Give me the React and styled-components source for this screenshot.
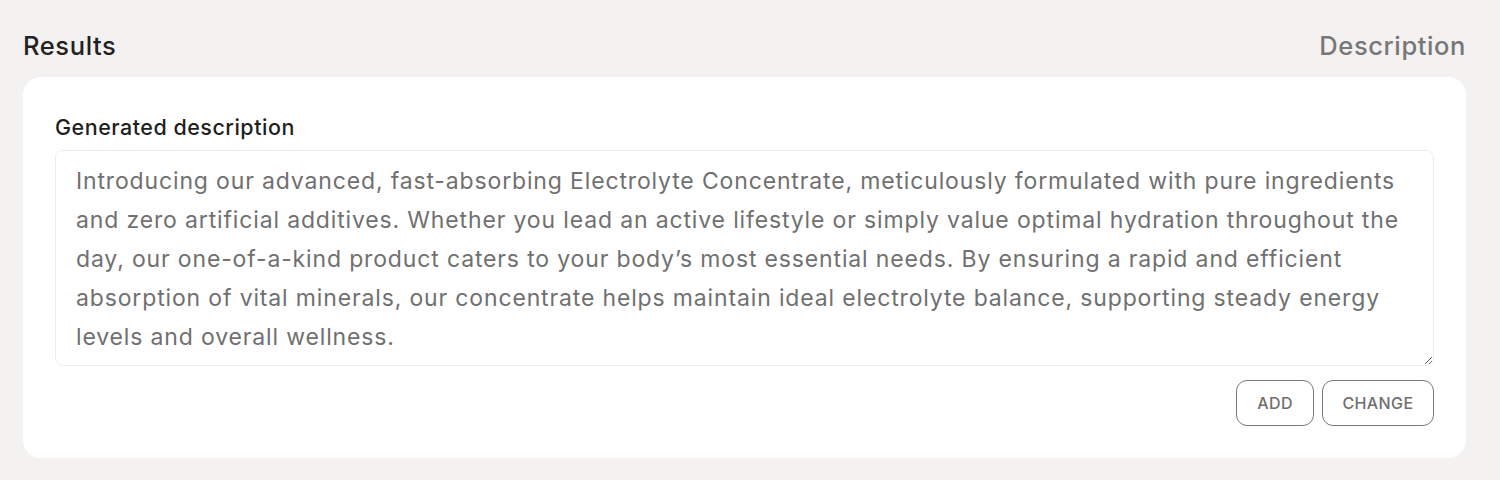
import React from "react";
import styled, { createGlobalStyle } from "styled-components";

const Global = createGlobalStyle`
  html, body { margin: 0; padding: 0; background: #f3f2f0; }
  body { font-family: Inter, "Noto Sans", sans-serif; -webkit-font-smoothing: antialiased; }
  * { box-sizing: border-box; }
`;

const Page = styled.div`
  padding: 28px 34px 22px 23px;
  display: flex;
  flex-direction: column;
  gap: 15px;
`;

const Header = styled.div`
  display: flex;
  justify-content: space-between;
  align-items: center;
  height: 34px;
`;

const Title = styled.h2`
  margin: 0;
  font-size: 25.5px;
  font-weight: 500;
  color: ${(p) => (p.$muted ? "#777777" : "#222222")};
  letter-spacing: 0.6px;
`;

const Card = styled.section`
  background: #ffffff;
  border-radius: 18px;
  padding: 38px 32px 32px 32px;
  display: flex;
  flex-direction: column;
`;

const Label = styled.label`
  font-size: 21.5px;
  font-weight: 500;
  color: #1f1f1f;
  line-height: 24px;
  letter-spacing: 0.5px;
  margin-bottom: 11px;
`;

const TextArea = styled.textarea`
  width: 100%;
  height: 216px;
  border: 1px solid #ececec;
  border-radius: 8px;
  padding: 11px 20px 9px 20px;
  font-family: Inter, "Noto Sans", sans-serif;
  font-size: 23px;
  line-height: 39px;
  letter-spacing: 0.85px;
  color: #707070;
  resize: vertical;
  outline: none;
  background: #fff;
`;

const Actions = styled.div`
  display: flex;
  justify-content: flex-end;
  gap: 8px;
  margin-top: 14px;
`;

const Button = styled.button`
  height: 46px;
  padding: 0 ${(p) => p.$pad || 20}px;
  border: 1.5px solid #7a7a7a;
  border-radius: 11px;
  background: #fff;
  color: #6f6f6f;
  font-family: Inter, "Noto Sans", sans-serif;
  font-size: 16px;
  font-weight: 500;
  letter-spacing: 0.4px;
  text-transform: uppercase;
  cursor: pointer;
`;

const text =
  "Introducing our advanced, fast-absorbing Electrolyte Concentrate, meticulously formulated with pure ingredients and zero artificial additives. Whether you lead an active lifestyle or simply value optimal hydration throughout the day, our one-of-a-kind product caters to your body\u2019s most essential needs. By ensuring a rapid and efficient absorption of vital minerals, our concentrate helps maintain ideal electrolyte balance, supporting steady energy levels and overall wellness.";

export default function App() {
  return (
    <>
      <Global />
      <Page>
        <Header>
          <Title>Results</Title>
          <Title $muted>Description</Title>
        </Header>
        <Card>
          <Label htmlFor="desc">Generated description</Label>
          <TextArea id="desc" defaultValue={text} />
          <Actions>
            <Button $pad={20}>Add</Button>
            <Button $pad={19.5}>Change</Button>
          </Actions>
        </Card>
      </Page>
    </>
  );
}
